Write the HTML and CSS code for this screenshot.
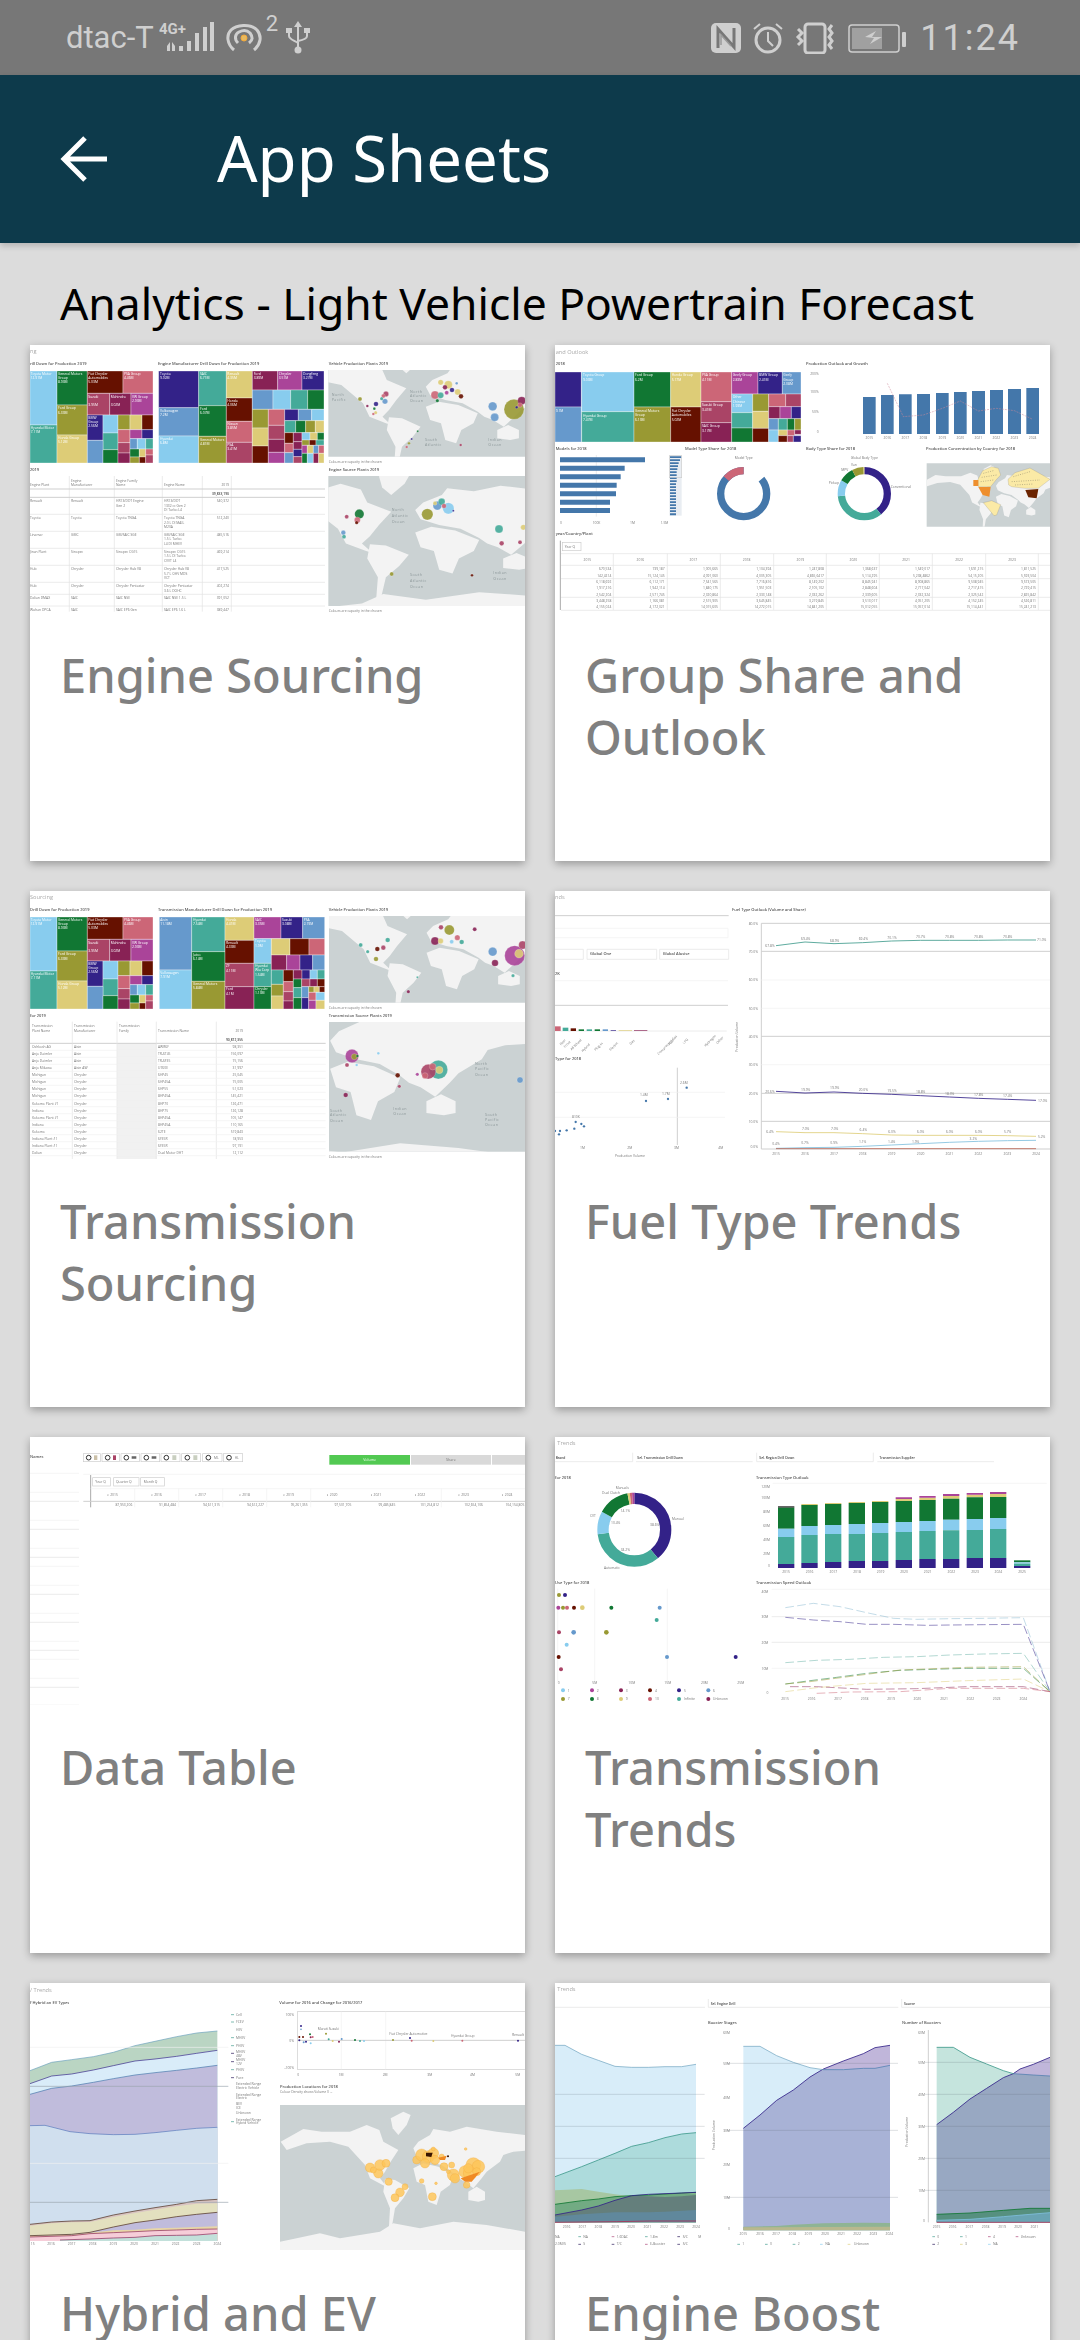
FILE: index.html
```html
<!DOCTYPE html>
<html lang="en">
<head>
<meta charset="utf-8">
<title>App Sheets</title>
<link rel="stylesheet" href="styles.css">
</head>
<body>
<div class="status">
  <div class="status-left">
    <span class="carrier">dtac-T</span>
    <svg class="ic" width="56" height="34" viewBox="0 0 56 34"><text class="net" x="0" y="13">4G+</text><path class="fill" d="M8 30h3v-9l-3 4zM13 21v9h3v-5zM20 25h4v5h-4zM28 20h4v10h-4zM36 12h4v18h-4zM44 6h4v24h-4zM51 1h4v29h-4z"/></svg>
    <svg class="ic hot" width="36" height="30" viewBox="0 0 36 30"><path class="line w3" d="M8 27C1 21 0 12 5 7s19-7 26 0c5 6 4 14-3 20"/><path class="line w3" d="M12 20c-4-4-3-9 1-11s8-2 11 1c3 4 3 7-1 10"/><circle class="fill" cx="18" cy="15" r="3"/></svg>
    <span class="sup">2</span>
    <svg class="ic usb" width="24" height="33" viewBox="0 0 24 33"><path class="line w2" d="M12 4v25M3 11v4c0 3 4 4 9 7M21 11v4c0 3-4 4-9 5"/><path class="fill" d="M12 0l4 6H8zM0 7h6v5H0zM18 7h6v5h-6z"/><circle class="fill" cx="12" cy="29" r="3.5"/></svg>
  </div>
  <div class="status-right">
    <svg class="ic" width="32" height="32" viewBox="0 0 32 32"><rect class="fill" x="1" y="1" width="30" height="30" rx="5"/><path class="cut" d="M8 26V7l16 18V6"/><path class="cut2" d="M11 23V13l10 11"/></svg>
    <svg class="ic" width="32" height="32" viewBox="0 0 32 32"><circle class="line w3" cx="16" cy="18" r="12"/><path class="line w2" d="M16 10v9l5 5M2 7l6-5M30 7l-6-5"/></svg>
    <svg class="ic" width="42" height="32" viewBox="0 0 42 32"><rect class="line w3" x="11" y="2" width="20" height="29" rx="3"/><path class="line w3" d="M4 7l4 4-4 4 4 4-4 4M38 3l-3 4 3 4-3 4 3 4-3 4 3 4"/></svg>
    <svg class="ic batt" width="60" height="30" viewBox="0 0 60 30"><rect class="line w1" x="1" y="2" width="50" height="27" rx="3"/><rect class="bfill" x="4" y="5" width="30" height="21"/><path class="fill" d="M17 14l11-6-4 6h10l-12 7 4-6z"/><rect class="fill" x="54" y="9" width="4" height="15" rx="1"/></svg>
    <span class="time">11:24</span>
  </div>
</div>
<header class="appbar">
  <svg class="back" width="48" height="48" viewBox="0 0 48 48"><path d="M47 24H5M25 3L4 24l21 21"/></svg>
  <h1 class="apptitle">App Sheets</h1>
</header>
<main class="content">
  <h2 class="apptext">Analytics - Light Vehicle Powertrain Forecast</h2>
  <div class="grid">

    <article class="card">
      <svg class="thumb" viewBox="30 15 1485 804">
        <defs>
          <g id="world">
            <rect class="sea" x="600" y="300" width="1200" height="640"/>
            <path class="land" d="M782 500L850 462L905 470L990 470L1040 450L1078 465L1090 500L1135 525L1112 560L1095 590L1080 610L1100 635L1088 630L1050 610L1035 570L985 515L930 500L860 505L800 525Z"/>
            <path class="land" d="M1112 430L1150 410L1172 420L1160 450L1135 480L1118 460Z"/>
            <path class="land" d="M1095 612L1125 615L1168 640L1150 670L1125 700L1115 760L1105 790L1110 700L1090 650Z"/>
            <path class="land" d="M1180 580L1210 565L1255 575L1300 600L1290 630L1262 650L1250 690L1225 680L1215 630L1190 620Z"/>
            <path class="land" d="M1190 545L1180 520L1195 500L1230 480L1240 462L1290 470L1340 455L1430 470L1515 480L1540 490L1540 525L1480 530L1450 540L1440 560L1400 590L1385 610L1360 640L1335 620L1315 610L1300 595L1265 570L1225 560Z"/>
            <path class="land" d="M1345 650L1370 635L1395 650L1395 675L1375 680L1345 675Z"/>
            <path class="land" d="M600 810L780 800L830 790L900 775L960 790L1080 770L1120 745L1200 760L1300 740L1400 750L1515 770L1800 780V940H600Z"/>
          </g>
          <g id="tm1" class="tm">
            <path class="lb" d="M30 93H111V255H30z"/><path class="te" d="M30 255H111V369H30z"/><path class="gr" d="M111 93H202V195H111z"/><path class="ol" d="M111 195H202V285H111z"/><path class="sa" d="M111 285H202V369H111z"/><path class="dr" d="M202 93H309V160H202z"/><path class="ro" d="M309 93H399V160H309z"/><path class="bo" d="M202 160H269V225H202z"/><path class="wi" d="M269 160H333V225H269z"/><path class="ma" d="M333 160H399V225H333z"/><path class="pu" d="M202 225H249V301H202z"/><path class="lb" d="M249 225H294V279H249z"/><path class="te" d="M249 279H294V329H249z"/><path class="bl" d="M202 301H249V369H202z"/><path class="gr" d="M249 329H294V369H249z"/><path class="ol" d="M294 225H330V269H294z"/><path class="sa" d="M330 225H366V269H330z"/><path class="dr" d="M366 225H399V269H366z"/><path class="ro" d="M294 269H330V308H294z"/><path class="bo" d="M294 308H330V339H294z"/><path class="wi" d="M294 339H330V369H294z"/><path class="ma" d="M330 269H366V296H330z"/><path class="pu" d="M366 269H399V296H366z"/><path class="bl" d="M330 296H352V327H330z"/><path class="lb" d="M352 296H377V327H352z"/><path class="te" d="M377 296H399V327H377z"/><path class="gr" d="M330 327H358V351H330z"/><path class="sa" d="M358 327H377V351H358z"/><path class="ro" d="M377 327H399V345H377z"/><path class="ol" d="M330 351H358V369H330z"/><path class="dr" d="M358 351H377V369H358z"/><path class="bo" d="M377 345H399V369H377z"/>
            <text class="tw" x="32" y="104">Toyota Motor</text><text class="tw" x="32" y="116">12.91M</text><text class="tw" x="114" y="104">General Motors</text><text class="tw" x="114" y="116">Group</text><text class="tw" x="114" y="130">8.93M</text><text class="tw" x="205" y="104">Fiat Chrysler</text><text class="tw" x="205" y="116">Automobiles</text><text class="tw" x="205" y="130">5.03M</text><text class="tw" x="312" y="104">PSA Group</text><text class="tw" x="312" y="116">4.46M</text><text class="tw" x="205" y="173">Suzuki</text><text class="tw" x="205" y="198">3.95M</text><text class="tw" x="272" y="173">Mahindra</text><text class="tw" x="272" y="198">3.02M</text><text class="tw" x="336" y="173">VW Group</text><text class="tw" x="336" y="186">2.93M</text><text class="tw" x="114" y="208">Ford Group</text><text class="tw" x="114" y="221">6.33M</text><text class="tw" x="114" y="298">Honda Group</text><text class="tw" x="114" y="310">5.12M</text><text class="tw" x="32" y="266">Hyundai Motor</text><text class="tw" x="32" y="278">7.11M</text><text class="tw" x="205" y="236">BMW</text><text class="tw" x="205" y="248">Group</text><text class="tw" x="205" y="262">2.56M</text>
          </g>
        </defs>
        <text class="tl" x="30" y="39">ng</text>
        <text class="th" x="30" y="74">rill Down for Production 2019</text>
        <text class="th" x="414" y="74">Engine Manufacturer Drill Down for Production 2019</text>
        <text class="th" x="926" y="74">Vehicle Production Plants 2019</text>
        <use href="#tm1"/>
        <g class="tm">
          <path class="pu" d="M416 93H536V203H416z"/><path class="bl" d="M416 203H536V288H416z"/><path class="lb" d="M416 288H536V369H416z"/><path class="te" d="M536 93H619V197H536z"/><path class="gr" d="M536 197H619V289H536z"/><path class="ol" d="M536 289H619V369H536z"/><path class="sa" d="M619 93H697V174H619z"/><path class="dr" d="M619 174H697V244H619z"/><path class="ro" d="M619 244H697V307H619z"/><path class="bo" d="M619 307H697V369H619z"/><path class="wi" d="M697 93H773V150H697z"/><path class="ma" d="M773 93H846V150H773z"/><path class="pu" d="M846 93H912V150H846z"/><path class="bl" d="M697 150H759V208H697z"/><path class="lb" d="M759 150H812V208H759z"/><path class="te" d="M812 150H863V208H812z"/><path class="gr" d="M863 150H912V208H863z"/><path class="ol" d="M697 208H745V264H697z"/><path class="sa" d="M697 264H745V318H697z"/><path class="dr" d="M697 318H745V369H697z"/><path class="ro" d="M745 208H794V256H745z"/><path class="bo" d="M745 256H794V298H745z"/><path class="wi" d="M745 298H794V337H745z"/><path class="ma" d="M745 337H794V369H745z"/><path class="pu" d="M794 208H835V242H794z"/><path class="bl" d="M835 208H875V242H835z"/><path class="lb" d="M875 208H912V242H875z"/><path class="te" d="M794 242H827V278H794z"/><path class="gr" d="M827 242H857V278H827z"/><path class="ol" d="M857 242H886V278H857z"/><path class="sa" d="M886 242H912V278H886z"/><path class="dr" d="M794 278H820V310H794z"/><path class="wi" d="M820 278H846V305H820z"/><path class="lb" d="M846 278H870V300H846z"/><path class="sa" d="M870 278H892V300H870z"/><path class="gr" d="M892 278H912V300H892z"/><path class="ro" d="M794 310H820V338H794z"/><path class="wi" d="M820 305H846V328H820z"/><path class="bl" d="M794 338H820V369H794z"/><path class="pu" d="M820 328H846V350H820z"/><path class="bo" d="M820 350H846V369H820z"/><path class="ol" d="M846 300H868V316H846z"/><path class="dr" d="M868 300H888V316H868z"/><path class="te" d="M888 300H912V316H888z"/><path class="ma" d="M846 316H862V340H846z"/><path class="sa" d="M862 316H880V340H862z"/><path class="bl" d="M880 316H896V340H880z"/><path class="ro" d="M896 316H912V340H896z"/><path class="gr" d="M846 340H862V369H846z"/><path class="lb" d="M862 340H880V369H862z"/><path class="wi" d="M880 340H896V369H880z"/><path class="sa" d="M896 340H912V369H896z"/>
          <text class="tw" x="420" y="104">Toyota</text><text class="tw" x="420" y="116">9.92M</text><text class="tw" x="540" y="104">SAIC</text><text class="tw" x="540" y="116">6.71M</text><text class="tw" x="622" y="104">Renault</text><text class="tw" x="622" y="116">4.35M</text><text class="tw" x="701" y="104">Ford</text><text class="tw" x="701" y="116">3.89M</text><text class="tw" x="776" y="104">Chrysler</text><text class="tw" x="776" y="116">3.51M</text><text class="tw" x="849" y="104">Dongfeng</text><text class="tw" x="849" y="116">3.27M</text><text class="tw" x="420" y="216">Volkswagen</text><text class="tw" x="420" y="228">7.2M</text><text class="tw" x="540" y="209">Ford</text><text class="tw" x="540" y="221">6.07M</text><text class="tw" x="622" y="186">Honda</text><text class="tw" x="622" y="198">4.06M</text><text class="tw" x="622" y="256">Nissan</text><text class="tw" x="622" y="268">3.85M</text><text class="tw" x="420" y="300">Hyundai</text><text class="tw" x="420" y="312">6.8M</text><text class="tw" x="540" y="302">General Motors</text><text class="tw" x="540" y="314">4.81M</text><text class="tw" x="622" y="318">PSA</text><text class="tw" x="622" y="330">3.41M</text>
        </g>
        <svg x="925" y="90" width="590" height="260" viewBox="955 470 454 260" preserveAspectRatio="none"><use href="#world"/></svg>
        <g class="bub">
          <circle class="ro" cx="1245" cy="165" r="12"/><circle class="sa" cx="1262" cy="127" r="8"/><circle class="te" cx="1262" cy="166" r="9"/><circle class="sa" cx="1285" cy="134" r="12"/><circle class="wi" cx="1275" cy="142" r="7"/><circle class="pu" cx="1296" cy="150" r="7"/><circle class="ma" cx="1280" cy="158" r="6"/><circle class="sa" cx="1313" cy="156" r="9"/><circle class="dr" cx="1323" cy="169" r="7"/><circle class="gr" cx="1252" cy="182" r="5"/><circle class="bl" cx="1310" cy="130" r="4"/>
          <circle class="bo" cx="1098" cy="162" r="8"/><circle class="ro" cx="1090" cy="168" r="6"/><circle class="bl" cx="1095" cy="184" r="8"/><circle class="pu" cx="1068" cy="192" r="7"/><circle class="gr" cx="1063" cy="206" r="4"/><circle class="ol" cx="1020" cy="177" r="6"/><circle class="wi" cx="1042" cy="198" r="4"/><circle class="te" cx="1085" cy="176" r="5"/><circle class="sa" cx="1067" cy="218" r="5"/><circle class="ro" cx="1060" cy="222" r="4"/>
          <circle class="gr" cx="1193" cy="274" r="3"/><circle class="pu" cx="1175" cy="297" r="3"/><circle class="ol" cx="1167" cy="310" r="4"/><circle class="ro" cx="1160" cy="321" r="4"/>
          <circle class="bl" cx="1418" cy="199" r="13"/><circle class="bl" cx="1424" cy="232" r="12"/><circle class="ol" cx="1482" cy="208" r="30"/><circle class="wi" cx="1505" cy="182" r="12"/><circle class="ro" cx="1500" cy="195" r="7"/><circle class="pu" cx="1490" cy="202" r="4"/><circle class="bo" cx="1322" cy="315" r="4"/>
        </g>
        <text class="ts" x="935" y="168">North</text><text class="ts" x="935" y="182">Pacific</text><text class="ts" x="1170" y="158">North</text><text class="ts" x="1170" y="172">Atlantic</text><text class="ts" x="1170" y="187">Ocean</text><text class="ts" x="1215" y="304">South</text><text class="ts" x="1215" y="318">Atlantic</text><text class="ts" x="1405" y="302">Indian</text><text class="ts" x="1405" y="318">Ocean</text>
        <text class="tx" x="926" y="368">Colours are capacity in the chosen</text>
        <text class="th" x="926" y="393">Engine Source Plants 2019</text>
        <text class="th" x="30" y="393">2019</text>
        <svg x="925" y="408" width="590" height="390" viewBox="1017 429 369 348" preserveAspectRatio="none"><use href="#world"/></svg>
        <g class="bub">
          <circle class="gr" cx="1018" cy="522" r="14"/><circle class="ro" cx="1012" cy="540" r="9"/><circle class="dr" cx="1010" cy="548" r="5"/><circle class="bo" cx="980" cy="530" r="6"/><circle class="bl" cx="970" cy="578" r="7"/><circle class="te" cx="972" cy="590" r="6"/><circle class="ol" cx="1222" cy="523" r="17"/><circle class="lb" cx="1285" cy="505" r="17"/><circle class="bl" cx="1252" cy="497" r="13"/><circle class="te" cx="1265" cy="485" r="10"/><circle class="ro" cx="1272" cy="498" r="7"/><circle class="sa" cx="1245" cy="490" r="6"/><circle class="pu" cx="1300" cy="512" r="3"/><circle class="te" cx="1437" cy="567" r="12"/><circle class="bo" cx="1445" cy="610" r="7"/><circle class="ol" cx="1115" cy="702" r="6"/><circle class="dr" cx="1356" cy="706" r="4"/><circle class="sa" cx="1510" cy="562" r="8"/><circle class="bo" cx="1500" cy="607" r="6"/>
        </g>
        <text class="ts" x="1115" y="512">North</text><text class="ts" x="1115" y="530">Atlantic</text><text class="ts" x="1115" y="550">Ocean</text><text class="ts" x="1170" y="708">South</text><text class="ts" x="1170" y="727">Atlantic</text><text class="ts" x="1170" y="745">Ocean</text><text class="ts" x="1420" y="702">Indian</text><text class="ts" x="1420" y="720">Ocean</text>
        <text class="tx" x="926" y="815">Colours are capacity in the chosen</text>
        <path class="gl" d="M148 408V815M283 408V815M427 408V815M547 408V815M634 408V815"/>
        <path class="gd" d="M30 447H915M30 472H915"/>
        <path class="gl" d="M30 523H915M30 574H915M30 625H915M30 676H915M30 727H915M30 763H915M30 798H915"/>
        <g class="tt"><text x="30" y="439">Engine Plant</text><text x="153" y="425">Engine</text><text x="153" y="439">Manufacturer</text><text x="288" y="425">Engine Family</text><text x="288" y="439">Name</text><text x="432" y="439">Engine Name</text><text class="r" x="627" y="439">2019</text><text class="r b" x="627" y="464">39,833,190</text>
        <text x="30" y="486">Renault</text><text x="153" y="486">Renault</text><text x="288" y="486">HR13/DDT Engine</text><text x="288" y="500">Gen 2</text><text x="432" y="486">HR13/DDT</text><text x="432" y="500">1332 cc Gen 2</text><text x="432" y="514">DI Turbo L4</text><text class="r" x="627" y="486">540,372</text>
        <text x="30" y="537">Toyota</text><text x="153" y="537">Toyota</text><text x="288" y="537">Toyota TNGA</text><text x="432" y="537">Toyota TNGA</text><text x="432" y="551">2.0 L DI MAIL</text><text x="432" y="565">M20A</text><text class="r" x="627" y="537">512,240</text>
        <text x="30" y="587">Linamar</text><text x="153" y="587">GMC</text><text x="288" y="587">GM/SAIC SGE</text><text x="432" y="587">GM/SAIC SGE</text><text x="432" y="601">1.5 L Turbo</text><text x="432" y="615">L4 DI MHEV</text><text class="r" x="627" y="587">485,516</text>
        <text x="30" y="638">Jinan Plant</text><text x="153" y="638">Sinopec</text><text x="288" y="638">Sinopec CG15</text><text x="432" y="638">Sinopec CG15</text><text x="432" y="652">1.5 L DI Turbo</text><text x="432" y="666">CVVT L4</text><text class="r" x="627" y="638">469,214</text>
        <text x="30" y="690">Hub</text><text x="153" y="690">Chrysler</text><text x="288" y="690">Chrysler Hub V8</text><text x="432" y="690">Chrysler Hub V8</text><text x="432" y="704">5.7 L OHV MDS</text><text x="432" y="718">VCT</text><text class="r" x="627" y="690">417,525</text>
        <text x="30" y="741">Hub</text><text x="153" y="741">Chrysler</text><text x="288" y="741">Chrysler Pentastar</text><text x="432" y="741">Chrysler Pentastar</text><text x="432" y="755">3.6 L DOHC</text><text class="r" x="627" y="741">402,274</text>
        <text x="30" y="776">Dalian DMAX</text><text x="153" y="776">SAIC</text><text x="288" y="776">SAIC NSE</text><text x="432" y="776">SAIC NSE 1.5 L</text><text class="r" x="627" y="776">391,052</text>
        <text x="30" y="812">Wuhan DPCA</text><text x="153" y="812">SAIC</text><text x="288" y="812">SAIC EP6 Gen</text><text x="432" y="812">SAIC EP6 1.6 L</text><text class="r" x="627" y="812">389,447</text></g>
      </svg>
      <p class="cap">Engine Sourcing</p>
    </article>

    <article class="card">
      <svg class="thumb" viewBox="15 15 1485 804">
        <text class="tl" x="17" y="41">and Outlook</text>
        <text class="th" x="17" y="76">2018</text><text class="th" x="768" y="76">Production Outlook and Growth</text>
        <g class="tm">
          <path class="pu" d="M15 96H94V201H15z"/><path class="bl" d="M15 201H94V306H15z"/><path class="lb" d="M95 96H252V215H95z"/><path class="te" d="M95 215H252V306H95z"/><path class="gr" d="M252 96H362V201H252z"/><path class="ol" d="M252 201H362V306H252z"/><path class="sa" d="M362 96H453V201H362z"/><path class="dr" d="M362 201H453V306H362z"/><path class="ro" d="M453 96H545V185H453z"/><path class="bo" d="M453 185H545V248H453z"/><path class="wi" d="M453 248H545V306H453z"/><path class="ma" d="M545 96H624V162H545z"/><path class="pu" d="M624 96H697V162H624z"/><path class="bl" d="M697 96H753V162H697z"/><path class="lb" d="M545 162H608V218H545z"/><path class="te" d="M545 218H608V264H545z"/><path class="gr" d="M545 264H608V306H545z"/><path class="ol" d="M608 162H656V214H608z"/><path class="sa" d="M608 214H656V265H608z"/><path class="dr" d="M608 265H656V306H608z"/><path class="ro" d="M656 162H707V200H656z"/><path class="bo" d="M707 162H753V200H707z"/><path class="wi" d="M656 200H690V236H656z"/><path class="ma" d="M690 200H724V236H690z"/><path class="pu" d="M724 200H753V236H724z"/><path class="bl" d="M656 236H685V270H656z"/><path class="te" d="M685 236H712V270H685z"/><path class="gr" d="M712 236H734V270H712z"/><path class="ol" d="M734 236H753V270H734z"/><path class="lb" d="M656 270H685V306H656z"/><path class="sa" d="M685 270H712V287H685z"/><path class="ro" d="M712 270H734V287H712z"/><path class="wi" d="M734 270H753V283H734z"/><path class="dr" d="M685 287H712V306H685z"/><path class="bo" d="M712 287H730V306H712z"/><path class="pu" d="M730 287H753V306H730z"/>
          <text class="tw" x="17" y="216">9.1M</text><text class="tw" x="99" y="109">Toyota Group</text><text class="tw" x="99" y="122">9.03M</text><text class="tw" x="99" y="231">Hyundai Group</text><text class="tw" x="99" y="243">7.47M</text><text class="tw" x="255" y="109">Ford Group</text><text class="tw" x="255" y="122">6.2M</text><text class="tw" x="255" y="215">General Motors</text><text class="tw" x="255" y="228">Group</text><text class="tw" x="255" y="242">6.13M</text><text class="tw" x="365" y="109">Honda Group</text><text class="tw" x="365" y="122">5.17M</text><text class="tw" x="365" y="215">Fiat Chrysler</text><text class="tw" x="365" y="228">Automobiles</text><text class="tw" x="365" y="242">5.02M</text><text class="tw" x="456" y="109">PSA Group</text><text class="tw" x="456" y="122">4.11M</text><text class="tw" x="456" y="197">Suzuki Group</text><text class="tw" x="456" y="212">3.41M</text><text class="tw" x="456" y="261">SAIC Group</text><text class="tw" x="456" y="275">3.17M</text><text class="tw" x="548" y="109">Geely Group</text><text class="tw" x="548" y="122">2.83M</text><text class="tw" x="627" y="109">BMW Group</text><text class="tw" x="627" y="122">2.41M</text><text class="tw" x="700" y="109">Geely</text><text class="tw" x="700" y="122">Group</text><text class="tw" x="700" y="136">2.08M</text><text class="tw" x="548" y="175">Other</text><text class="tw" x="548" y="189">Chinese</text><text class="tw" x="548" y="202">1.93M</text>
        </g>
        <g class="tt"><text class="r" x="806" y="104">200%</text><text class="r" x="806" y="160">100%</text><text class="r" x="806" y="220">50%</text><text class="r" x="806" y="278">0</text></g>
        <path class="barb" d="M939 171h38v111h-38zM993 165h38v117h-38zM1047 163h38v119h-38zM1101 162h39v120h-39zM1158 159h38v123h-38zM1212 156h38v126h-38zM1266 153h39v129h-39zM1320 150h39v132h-39zM1374 147h39v135h-39zM1429 144h38v138h-38z"/>
        <path class="dash" d="M1012 130L1060 230L1120 225L1177 205L1231 183L1285 213L1339 205L1393 212L1448 238"/>
        <g class="tt mid"><text x="958" y="296">2015</text><text x="1012" y="296">2016</text><text x="1066" y="296">2017</text><text x="1120" y="296">2018</text><text x="1177" y="296">2019</text><text x="1231" y="296">2020</text><text x="1285" y="296">2021</text><text x="1339" y="296">2022</text><text x="1393" y="296">2023</text><text x="1448" y="296">2024</text></g>
        <text class="th" x="17" y="329">Models for 2018</text><text class="th" x="405" y="329">Model Type Share for 2018</text><text class="th" x="768" y="329">Body Type Share for 2018</text><text class="th" x="1128" y="329">Production Concentration by Country for 2018</text>
        <path class="gl" d="M139 345V530"/>
        <path class="barb" d="M30 352h255v15H30zM30 377h194v15H30zM30 403h182v15H30zM30 428h170v15H30zM30 454h168v15H30zM30 479h150v15H30zM30 504h150v15H30z"/>
        <rect class="scrollb" x="358" y="347" width="37" height="180"/>
        <path class="barb" d="M360 349h34v5h-34zM360 358h30v5h-30zM360 367h26v5h-26zM360 376h24v5h-24zM360 385h22v5h-22zM360 394h20v5h-20zM360 403h20v5h-20zM360 412h20v5h-20zM360 421h20v5h-20zM360 430h18v5h-18zM360 439h18v5h-18zM360 448h18v5h-18zM360 457h18v5h-18zM360 466h18v5h-18zM360 475h18v5h-18zM360 484h18v5h-18zM360 493h18v5h-18zM360 502h18v5h-18zM360 511h18v5h-18zM360 520h18v6h-18z"/>
        <rect class="outline" x="358" y="347" width="37" height="66"/>
        <g class="tt"><text x="30" y="551">0</text><text x="128" y="551">100K</text><text x="240" y="551">1M</text><text x="332" y="551">1.5M</text><text class="mid" x="581" y="358">Model Type</text><text class="mid" x="943" y="358">Global Body Type</text><text x="1022" y="443">Conventional</text><text x="836" y="431">Pickup</text><text x="874" y="392">MPV</text><text x="903" y="379">Van</text></g>
        <circle class="don dbl" cx="581" cy="461" r="69" pathLength="100" stroke-dasharray="86 14" stroke-dashoffset="-14" transform="rotate(-90 581 461)"/>
        <circle class="don dro" cx="581" cy="461" r="69" pathLength="100" stroke-dasharray="14 86" stroke-dashoffset="14" transform="rotate(-90 581 461)"/>
        <g transform="rotate(-90 943 461)">
          <circle class="don dpu" cx="943" cy="461" r="69" pathLength="100" stroke-dasharray="39 61"/>
          <circle class="don dte" cx="943" cy="461" r="69" pathLength="100" stroke-dasharray="34 66" stroke-dashoffset="-39"/>
          <circle class="don dlb" cx="943" cy="461" r="69" pathLength="100" stroke-dasharray="10 90" stroke-dashoffset="-73"/>
          <circle class="don dgr" cx="943" cy="461" r="69" pathLength="100" stroke-dasharray="9 91" stroke-dashoffset="-83"/>
          <circle class="don dol" cx="943" cy="461" r="69" pathLength="100" stroke-dasharray="7 93" stroke-dashoffset="-92"/>
          <circle class="don dsa" cx="943" cy="461" r="69" pathLength="100" stroke-dasharray="1 99" stroke-dashoffset="-99"/>
        </g>
        <svg x="1130" y="370" width="370" height="190" viewBox="802 400 673 340" preserveAspectRatio="none"><use href="#world"/></svg>
        <path class="chy" d="M1284 418L1298 392L1325 380L1345 385L1352 405L1338 420L1322 440L1285 440ZM1300 488L1325 482L1352 494L1340 525L1332 527ZM1374 418L1395 398L1440 384L1500 418L1465 445L1425 445L1385 440L1376 435Z"/>
        <path class="chl" d="M1300 400L1330 392M1295 412L1340 405M1292 425L1330 420M1390 410L1440 395M1385 425L1470 420M1395 435L1450 432"/>
        <path class="cho" d="M1270 420H1285V438H1270zM1285 441L1322 441L1318 470L1298 465Z"/>
        <path class="chd" d="M1426 450L1465 447L1460 475L1435 472Z"/>
        <text class="th" x="17" y="585">year/Country/Plant</text>
        <path class="gd2" d="M31 602V810"/>
        <rect class="outline" x="37" y="607" width="56" height="25"/>
        <text class="tt" x="44" y="624">Year Q</text>
        <path class="gl" d="M33 641H1500M33 676H1500M33 716H1500M33 772H1500M33 811H1500M190 641V810M352 641V810M511 641V810M671 641V810M829 641V810M988 641V810M1147 641V810M1307 641V810M1465 641V810"/>
        <g class="tt mid"><text x="112" y="662">2015</text><text x="271" y="662">2016</text><text x="430" y="662">2017</text><text x="590" y="662">2018</text><text x="751" y="662">2019</text><text x="910" y="662">2020</text><text x="1068" y="662">2021</text><text x="1227" y="662">2022</text><text x="1386" y="662">2023</text></g>
        <g class="tt"><text class="r" x="184" y="690">670,534</text><text class="r" x="344" y="690">739,187</text><text class="r" x="504" y="690">1,005,665</text><text class="r" x="664" y="690">1,104,394</text><text class="r" x="822" y="690">1,247,808</text><text class="r" x="982" y="690">1,368,637</text><text class="r" x="1140" y="690">1,549,017</text><text class="r" x="1300" y="690">1,691,215</text><text class="r" x="1458" y="690">1,811,525</text>
        <text class="r" x="184" y="710">142,4214</text><text class="r" x="344" y="710">15,124,145</text><text class="r" x="504" y="710">4,091,060</text><text class="r" x="664" y="710">4,005,305</text><text class="r" x="822" y="710">4,865,6417</text><text class="r" x="982" y="710">5,114,295</text><text class="r" x="1140" y="710">5,238,4862</text><text class="r" x="1300" y="710">54,15,205</text><text class="r" x="1458" y="710">5,593,504</text>
        <text class="r" x="184" y="729">6,118,692</text><text class="r" x="344" y="729">6,112,171</text><text class="r" x="504" y="729">7,541,565</text><text class="r" x="664" y="729">7,716,816</text><text class="r" x="822" y="729">8,149,202</text><text class="r" x="982" y="729">8,845,941</text><text class="r" x="1140" y="729">8,908,865</text><text class="r" x="1300" y="729">9,508,945</text><text class="r" x="1458" y="729">9,573,505</text>
        <text class="r" x="184" y="748">1,917,216</text><text class="r" x="344" y="748">1,942,114</text><text class="r" x="504" y="748">1,840,175</text><text class="r" x="664" y="748">1,951,503</text><text class="r" x="822" y="748">2,105,102</text><text class="r" x="982" y="748">2,848,604</text><text class="r" x="1140" y="748">2,717,042</text><text class="r" x="1300" y="748">2,717,415</text><text class="r" x="1458" y="748">2,729,415</text>
        <text class="r" x="184" y="767">2,542,204</text><text class="r" x="344" y="767">2,571,745</text><text class="r" x="504" y="767">2,320,864</text><text class="r" x="664" y="767">2,333,148</text><text class="r" x="822" y="767">2,332,262</text><text class="r" x="982" y="767">2,339,605</text><text class="r" x="1140" y="767">2,332,324</text><text class="r" x="1300" y="767">2,325,542</text><text class="r" x="1458" y="767">2,825,842</text>
        <text class="r" x="184" y="786">3,448,258</text><text class="r" x="344" y="786">1,166,081</text><text class="r" x="504" y="786">2,515,905</text><text class="r" x="664" y="786">3,645,845</text><text class="r" x="822" y="786">3,219,845</text><text class="r" x="982" y="786">3,513,017</text><text class="r" x="1140" y="786">4,051,205</text><text class="r" x="1300" y="786">4,152,245</text><text class="r" x="1458" y="786">4,526,811</text>
        <text class="r" x="184" y="805">4,155,024</text><text class="r" x="344" y="805">4,172,021</text><text class="r" x="504" y="805">14,015,605</text><text class="r" x="664" y="805">14,272,015</text><text class="r" x="822" y="805">14,841,205</text><text class="r" x="982" y="805">15,012,055</text><text class="r" x="1140" y="805">15,057,014</text><text class="r" x="1300" y="805">15,114,441</text><text class="r" x="1458" y="805">15,241,213</text></g>
      </svg>
      <p class="cap">Group Share and Outlook</p>
    </article>

    <article class="card">
      <svg class="thumb" viewBox="30 18 1485 804">
        <text class="tl" x="30" y="41">Sourcing</text>
        <text class="th" x="30" y="77">Drill Down for Production 2019</text><text class="th" x="414" y="77">Transmission Manufacturer Drill Down for Production 2019</text><text class="th" x="926" y="77">Vehicle Production Plants 2019</text>
        <use href="#tm1" y="3"/>
        <g class="tm">
          <path class="bl" d="M418 96H515V255H418z"/><path class="lb" d="M418 255H515V372H418z"/><path class="te" d="M515 96H615V200H515z"/><path class="gr" d="M515 200H615V289H515z"/><path class="ol" d="M515 289H615V372H515z"/><path class="sa" d="M615 96H702V166H615z"/><path class="dr" d="M615 166H702V235H615z"/><path class="bo" d="M615 235H702V305H615z"/><path class="wi" d="M615 305H702V372H615z"/><path class="ma" d="M702 96H783V161H702z"/><path class="pu" d="M783 96H848V161H783z"/><path class="bl" d="M848 96H914V161H848z"/><path class="lb" d="M702 161H754V235H702z"/><path class="sa" d="M754 161H810V210H754z"/><path class="dr" d="M810 161H867V210H810z"/><path class="ro" d="M867 161H914V210H867z"/><path class="te" d="M702 235H754V305H702z"/><path class="gr" d="M702 305H754V372H702z"/><path class="wi" d="M754 210H800V255H754z"/><path class="ma" d="M800 210H840V255H800z"/><path class="pu" d="M840 210H878V255H840z"/><path class="bl" d="M878 210H914V255H878z"/><path class="te" d="M754 255H790V298H754z"/><path class="dr" d="M790 255H820V290H790z"/><path class="wi" d="M820 255H846V282H820z"/><path class="pu" d="M846 255H870V282H846z"/><path class="lb" d="M870 255H892V282H870z"/><path class="te" d="M892 255H914V282H892z"/><path class="ol" d="M754 298H790V333H754z"/><path class="sa" d="M754 333H790V372H754z"/><path class="ro" d="M790 290H820V320H790z"/><path class="gr" d="M820 282H845V308H820z"/><path class="bo" d="M845 282H870V305H845z"/><path class="wi" d="M870 282H892V305H870z"/><path class="dr" d="M892 282H914V305H892z"/><path class="bo" d="M790 320H820V348H790z"/><path class="wi" d="M790 348H820V372H790z"/><path class="te" d="M820 308H845V338H820z"/><path class="bl" d="M845 305H866V338H845z"/><path class="ol" d="M866 305H882V322H866z"/><path class="sa" d="M882 305H898V322H882z"/><path class="dr" d="M898 305H914V322H898z"/><path class="gr" d="M820 338H845V372H820z"/><path class="pu" d="M845 338H866V372H845z"/><path class="ro" d="M866 322H888V346H866z"/><path class="lb" d="M888 322H914V346H888z"/><path class="ma" d="M866 346H888V372H866z"/><path class="sa" d="M888 346H914V372H888z"/>
          <text class="tw" x="421" y="107">Aisin</text><text class="tw" x="421" y="119">11.18M</text><text class="tw" x="421" y="267">Volkswagen</text><text class="tw" x="421" y="280">7.91M</text><text class="tw" x="519" y="107">Hyundai</text><text class="tw" x="519" y="119">7.54M</text><text class="tw" x="519" y="212">Jatco</text><text class="tw" x="519" y="224">6.14M</text><text class="tw" x="519" y="300">General Motors</text><text class="tw" x="519" y="313">5.84M</text><text class="tw" x="618" y="107">Honda</text><text class="tw" x="618" y="119">4.41M</text><text class="tw" x="618" y="177">Renault</text><text class="tw" x="618" y="190">4.33M</text><text class="tw" x="618" y="246">ZF</text><text class="tw" x="618" y="260">4.11M</text><text class="tw" x="618" y="315">Ford</text><text class="tw" x="618" y="329">4.1M</text><text class="tw" x="705" y="107">SAIC</text><text class="tw" x="705" y="119">3.35M</text><text class="tw" x="786" y="107">Suzuki</text><text class="tw" x="786" y="119">3.08M</text><text class="tw" x="851" y="107">PSA</text><text class="tw" x="851" y="119">2.19M</text><text class="tw" x="705" y="172">Toyota</text><text class="tw" x="705" y="185">1.9M</text><text class="tw" x="705" y="246">Hyundai</text><text class="tw" x="705" y="258">Wia Corp</text><text class="tw" x="705" y="274">1.54M</text><text class="tw" x="705" y="315">Chrysler</text><text class="tw" x="705" y="328">1.13M</text>
        </g>
        <svg x="927" y="93" width="588" height="260" viewBox="955 470 452 260" preserveAspectRatio="none"><use href="#world"/></svg>
        <g class="bub">
          <circle class="wi" cx="1245" cy="168" r="12"/><circle class="ol" cx="1288" cy="135" r="15"/><circle class="bo" cx="1263" cy="127" r="7"/><circle class="ro" cx="1312" cy="158" r="8"/><circle class="lb" cx="1295" cy="170" r="6"/><circle class="te" cx="1325" cy="171" r="7"/><circle class="wi" cx="1364" cy="133" r="6"/><circle class="sa" cx="1262" cy="168" r="8"/><circle class="te" cx="1103" cy="165" r="7"/><circle class="dr" cx="1072" cy="192" r="7"/><circle class="bo" cx="1090" cy="188" r="7"/><circle class="te" cx="1022" cy="180" r="6"/><circle class="ol" cx="1068" cy="222" r="7"/><circle class="te" cx="1043" cy="200" r="5"/><circle class="wi" cx="1165" cy="320" r="5"/><circle class="te" cx="1192" cy="277" r="3"/><circle class="bl" cx="1418" cy="200" r="13"/><circle class="wi" cx="1425" cy="234" r="10"/><circle class="ma" cx="1484" cy="212" r="30"/><circle class="sa" cx="1497" cy="206" r="13"/><circle class="bo" cx="1508" cy="180" r="12"/><circle class="te" cx="1479" cy="272" r="5"/>
        </g>
        <text class="tx" x="926" y="372">Colours are capacity in the chosen</text><text class="th" x="926" y="396">Transmission Source Plants 2019</text><text class="th" x="30" y="396">for 2019</text>
        <svg x="927" y="411" width="588" height="389" viewBox="1178 480 336 278" preserveAspectRatio="none"><use href="#world"/></svg>
        <g class="bub">
          <circle class="ma" cx="996" cy="513" r="20"/><circle class="ol" cx="1003" cy="515" r="9"/><circle class="gr" cx="1012" cy="513" r="4"/><circle class="bo" cx="981" cy="540" r="6"/><circle class="lb" cx="1010" cy="540" r="4"/><circle class="lb" cx="1075" cy="505" r="4"/><circle class="te" cx="1255" cy="554" r="28"/><circle class="sa" cx="1258" cy="555" r="11"/><circle class="bo" cx="1225" cy="560" r="22"/><circle class="ro" cx="1238" cy="545" r="10"/><circle class="ro" cx="1215" cy="572" r="9"/><circle class="dr" cx="1133" cy="571" r="7"/><circle class="bo" cx="1138" cy="604" r="5"/><circle class="wi" cx="977" cy="630" r="7"/><circle class="bl" cx="1500" cy="585" r="9"/><circle class="ma" cx="1192" cy="568" r="5"/>
        </g>
        <text class="ts" x="1365" y="540">North</text><text class="ts" x="1365" y="556">Pacific</text><text class="ts" x="1365" y="572">Ocean</text><text class="ts" x="930" y="680">South</text><text class="ts" x="930" y="694">Atlantic</text><text class="ts" x="930" y="710">Ocean</text><text class="ts" x="1395" y="692">South</text><text class="ts" x="1395" y="707">Pacific</text><text class="ts" x="1395" y="722">Ocean</text><text class="ts" x="1120" y="676">Indian</text><text class="ts" x="1120" y="690">Ocean</text>
        <text class="tx" x="926" y="819">Colours are capacity in the chosen</text>
        <rect class="shade" x="292" y="476" width="117" height="346"/>
        <path class="gd" d="M30 475H917"/>
        <path class="gl" d="M157 410V822M291 410V822M409 410V822M589 410V822"/>
        <path class="gf" d="M30 496H917M30 517H917M30 538H917M30 559H917M30 580H917M30 601H917M30 622H917M30 644H917M30 665H917M30 686H917M30 707H917M30 728H917M30 749H917M30 770H917M30 791H917M30 812H917"/>
        <g class="tt"><text x="36" y="426">Transmission</text><text x="36" y="440">Plant Name</text><text x="162" y="426">Transmission</text><text x="162" y="440">Manufacturer</text><text x="297" y="426">Transmission</text><text x="297" y="440">Family</text><text x="414" y="440">Transmission Name</text><text class="r" x="669" y="440">2019</text><text class="r b" x="669" y="467">90,812,355</text>
        <text x="36" y="489">Oshkosh AG</text><text x="162" y="489">Aisin</text><text x="414" y="489">AWR6F</text><text class="r" x="669" y="489">98,351</text>
        <text x="36" y="510">Anjo Daimler</text><text x="162" y="510">Aisin</text><text x="414" y="510">TR-6T45</text><text class="r" x="669" y="510">156,097</text>
        <text x="36" y="531">Anjo Daimler</text><text x="162" y="531">Aisin</text><text x="414" y="531">TR-6F35</text><text class="r" x="669" y="531">75,156</text>
        <text x="36" y="552">Anjo Mikawa</text><text x="162" y="552">Aisin AW</text><text x="414" y="552">U760E</text><text class="r" x="669" y="552">31,997</text>
        <text x="36" y="574">Michigan</text><text x="162" y="574">Chrysler</text><text x="414" y="574">6HP45</text><text class="r" x="669" y="574">25,045</text>
        <text x="36" y="595">Michigan</text><text x="162" y="595">Chrysler</text><text x="414" y="595">6HP45A</text><text class="r" x="669" y="595">75,005</text>
        <text x="36" y="616">Michigan</text><text x="162" y="616">Chrysler</text><text x="414" y="616">6HP55</text><text class="r" x="669" y="616">51,023</text>
        <text x="36" y="637">Michigan</text><text x="162" y="637">Chrysler</text><text x="414" y="637">8HP45A</text><text class="r" x="669" y="637">145,421</text>
        <text x="36" y="659">Kokomo Plant #1</text><text x="162" y="659">Chrysler</text><text x="414" y="659">8HP70</text><text class="r" x="669" y="659">126,471</text>
        <text x="36" y="680">Indiana</text><text x="162" y="680">Chrysler</text><text x="414" y="680">8HP75</text><text class="r" x="669" y="680">126,128</text>
        <text x="36" y="701">Kokomo Plant #1</text><text x="162" y="701">Chrysler</text><text x="414" y="701">8HP45A</text><text class="r" x="669" y="701">105,147</text>
        <text x="36" y="722">Indiana</text><text x="162" y="722">Chrysler</text><text x="414" y="722">8HP45A</text><text class="r" x="669" y="722">110,165</text>
        <text x="36" y="743">Kokomo</text><text x="162" y="743">Chrysler</text><text x="414" y="743">62TE</text><text class="r" x="669" y="743">519,843</text>
        <text x="36" y="764">Indiana Plant #1</text><text x="162" y="764">Chrysler</text><text x="414" y="764">6F35R</text><text class="r" x="669" y="764">18,953</text>
        <text x="36" y="785">Indiana Plant #1</text><text x="162" y="785">Chrysler</text><text x="414" y="785">6F35R</text><text class="r" x="669" y="785">97,191</text>
        <text x="36" y="806">Dalian</text><text x="162" y="806">Chrysler</text><text x="414" y="806">Dual Motor DHT</text><text class="r" x="669" y="806">12,112</text></g>
      </svg>
      <p class="cap">Transmission Sourcing</p>
    </article>

    <article class="card">
      <svg class="thumb" viewBox="15 18 1485 804">
        <text class="tl" x="15" y="43">nds</text>
        <text class="th" x="546" y="77">Fuel Type Outlook (Volume and Share)</text>
        <path class="gd" d="M15 92H536M15 361H534"/>
        <path class="gf" d="M15 130H534M15 158H534M534 130V158M15 287H534"/>
        <path class="gl" d="M15 223H100V193H15M111 193H320V223H111zM329 193H536V223H329zM15 438H530"/>
        <text class="th" x="120" y="209">Global One</text><text class="th" x="338" y="209">Global Alasise</text><text class="th" x="15" y="269">2K</text><text class="th" x="15" y="524">Type for 2018</text>
        <path class="ro" d="M15 424H32V438H15z"/><path class="te" d="M38 428H55V438H38z"/><path class="dr" d="M62 430H78V438H62z"/><path class="gr" d="M86 433H102V438H86z"/><path class="te" d="M110 433H126V438H110z"/><path class="gr" d="M134 433H150V438H134z"/><path class="bl" d="M158 433H174V438H158z"/><path class="pu" d="M182 436H198V438H182z"/><path class="sa" d="M206 436H246V438H206z"/><path class="wi" d="M252 436H292V438H252z"/>
        <g class="tt rot"><text transform="rotate(-45 40 460)" x="20" y="470">Rear</text><text transform="rotate(-45 65 465)" x="34" y="468">Front</text><text transform="rotate(-45 90 472)" x="55" y="472">All Wheel</text><text transform="rotate(-45 130 470)" x="85" y="470">Hybrid</text><text transform="rotate(-45 165 470)" x="125" y="470">Plug-in</text><text transform="rotate(-45 210 470)" x="170" y="470">Electric</text><text transform="rotate(-45 260 462)" x="235" y="462">Gas</text><text transform="rotate(-45 330 450)" x="285" y="490">Compressed Gas</text><text transform="rotate(-45 380 460)" x="350" y="460">Fuel</text><text transform="rotate(-45 420 460)" x="395" y="460">LPG</text><text transform="rotate(-45 470 475)" x="460" y="480">Hydrogen</text><text transform="rotate(-45 520 460)" x="495" y="460">Other</text></g>
        <path class="gd" d="M382 548V780"/><path class="gf" d="M15 622H525M15 697H525"/>
        <g class="dots"><circle cx="410" cy="608" r="3.5"/><circle cx="354" cy="642" r="3.5"/><circle cx="288" cy="648" r="3.5"/><circle cx="77" cy="711" r="3.5"/><circle cx="94" cy="717" r="3.5"/><circle cx="102" cy="724" r="3.5"/><circle cx="73" cy="731" r="3.5"/><circle cx="50" cy="736" r="3.5"/><circle cx="30" cy="738" r="3.5"/><circle cx="27" cy="748" r="3.5"/><circle cx="15" cy="738" r="3.5"/></g>
        <g class="tt"><text x="390" y="596">2.6M</text><text x="270" y="634">1.4M</text><text x="336" y="630">1.7M</text><text x="66" y="698">810K</text><text x="90" y="793">1M</text><text x="232" y="793">2M</text><text x="372" y="793">3M</text><text x="505" y="793">4M</text><text x="195" y="815">Production Volume</text></g>
        <path class="gd" d="M634 115V792M634 115H1500M634 199H1500M634 454H1500M634 625H1500M634 709H1500M634 792H1500"/>
        <path class="gf" d="M634 285H1500M634 370H1500M634 539H1500"/>
        <g class="tt r"><text x="624" y="119">80.0%</text><text x="624" y="203">70.0%</text><text x="624" y="289">60.0%</text><text x="624" y="374">50.0%</text><text x="624" y="458">40.0%</text><text x="624" y="543">30.0%</text><text x="624" y="629">20.0%</text><text x="624" y="713">10.0%</text><text x="624" y="790">0.0%</text></g>
        <text class="tt" transform="rotate(-90 565 500)" x="565" y="500">Production Volume</text>
        <path class="lte" d="M678 182L765 171L852 176L938 173L1025 168L1112 166L1198 166L1285 166L1372 165L1458 165"/>
        <path class="lpu" d="M678 619L765 624L852 621L938 625L1025 628L1112 632L1198 636L1285 640L1372 643L1458 646"/>
        <path class="lsa" d="M678 740L765 743L852 743L938 746L1025 750L1112 751L1198 751L1285 751L1372 752L1458 754"/>
        <path class="llb" d="M678 790L765 788L852 787L938 784L1025 780L1112 776L1198 772L1285 769L1372 767L1458 766"/>
        <path class="lro" d="M678 791H1458"/>
        <g class="tt mid"><text x="660" y="186">67.8%</text><text x="767" y="165">69.4%</text><text x="854" y="170">68.9%</text><text x="940" y="164">69.4%</text><text x="1026" y="161">70.1%</text><text x="1112" y="158">70.7%</text><text x="1199" y="158">70.8%</text><text x="1286" y="158">70.8%</text><text x="1373" y="158">70.8%</text><text x="1475" y="169">71.0%</text><text x="660" y="623">20.6%</text><text x="767" y="617">19.9%</text><text x="854" y="611">19.9%</text><text x="940" y="618">20.0%</text><text x="1026" y="621">19.5%</text><text x="1112" y="623">18.8%</text><text x="1199" y="629">18.3%</text><text x="1286" y="632">17.8%</text><text x="1373" y="635">17.4%</text><text x="1478" y="650">17.0%</text><text x="660" y="744">6.4%</text><text x="767" y="734">7.0%</text><text x="854" y="734">7.0%</text><text x="940" y="737">6.4%</text><text x="1026" y="743">6.0%</text><text x="1112" y="743">6.0%</text><text x="1199" y="743">6.0%</text><text x="1286" y="743">6.0%</text><text x="1373" y="743">5.7%</text><text x="1475" y="758">5.2%</text><text x="678" y="780">0.4%</text><text x="765" y="778">0.7%</text><text x="852" y="776">0.9%</text><text x="938" y="775">1.1%</text><text x="1025" y="773">1.4%</text><text x="1097" y="773">1.9%</text><text x="1270" y="764">3.2%</text></g>
        <g class="tt mid"><text x="678" y="809">2015</text><text x="765" y="809">2016</text><text x="852" y="809">2017</text><text x="938" y="809">2018</text><text x="1025" y="809">2019</text><text x="1112" y="809">2020</text><text x="1198" y="809">2021</text><text x="1285" y="809">2022</text><text x="1372" y="809">2023</text><text x="1458" y="809">2024</text></g>
      </svg>
      <p class="cap">Fuel Type Trends</p>
    </article>

    <article class="card">
      <svg class="thumb" viewBox="30 21 1485 804">
        <text class="th" x="30" y="84">Names</text>
        <path class="gf" d="M30 130H177M30 187H177M30 271H177M30 355H177M30 409H177M30 466H177M30 550H177M30 634H177M30 688H177M30 745H177M30 825H177M190 133H1515"/>
        <path class="gl" d="M30 214H177M30 298H177M30 382H177M30 493H177M30 577H177M30 661H177M30 772H177"/>
        <g class="chip"><rect x="190" y="71" width="51" height="24"/><rect x="246" y="71" width="52" height="24"/><rect x="303" y="71" width="55" height="24"/><rect x="363" y="71" width="56" height="24"/><rect x="423" y="71" width="57" height="24"/><rect x="485" y="71" width="57" height="24"/><rect x="548" y="71" width="58" height="24"/><rect x="610" y="71" width="58" height="24"/></g>
        <g class="chipi"><circle cx="206" cy="83" r="7"/><circle cx="263" cy="83" r="7"/><circle cx="319" cy="83" r="7"/><circle cx="379" cy="83" r="7"/><circle cx="439" cy="83" r="7"/><circle cx="502" cy="83" r="7"/><circle cx="565" cy="83" r="7"/><circle cx="627" cy="83" r="7"/></g>
        <path class="sw1" d="M222 76h10v14h-10z"/><path class="bo" d="M279 76h9v14h-9z"/><path class="sw2" d="M335 79h14v7h-14zM395 79h14v7h-14z"/><path class="sw3" d="M457 76h12v14h-12zM520 76h12v14h-12z"/>
        <g class="tt"><text x="582" y="87">ML</text><text x="644" y="87">HL</text></g>
        <rect class="gbtn" x="928" y="75" width="242" height="29"/><rect class="sbtn" x="1173" y="75" width="240" height="29"/><rect class="sbtn" x="1416" y="75" width="99" height="29"/>
        <text class="tbw" x="1049" y="93">Volume</text><text class="tbg" x="1293" y="93">Share</text>
        <path class="gd2" d="M212 135V232"/>
        <path class="gd" d="M190 214H1515"/>
        <path class="gf" d="M212 176H1515M344 176V232M476 176V232M608 176V232M740 176V232M872 176V232M1264 176V232"/>
        <rect class="outline" x="218" y="143" width="53" height="25"/><rect class="outline" x="281" y="143" width="76" height="25"/><rect class="outline" x="362" y="143" width="71" height="25"/>
        <g class="tt"><text x="226" y="159">Year Q</text><text x="288" y="159">Quarter Q</text><text x="371" y="159">Month Q</text>
        <text x="262" y="198">◐ 2015</text><text x="394" y="198">◐ 2016</text><text x="526" y="198">◐ 2017</text><text x="658" y="198">◐ 2018</text><text x="790" y="198">◐ 2019</text><text x="921" y="198">◐ 2020</text><text x="1052" y="198">◐ 2021</text><text x="1184" y="198">◐ 2022</text><text x="1315" y="198">◐ 2023</text><text x="1446" y="198">◐ 2024</text>
        <text class="r" x="337" y="228">87,953,206</text><text class="r" x="468" y="228">91,854,484</text><text class="r" x="600" y="228">94,611,315</text><text class="r" x="732" y="228">94,612,227</text><text class="r" x="863" y="228">95,261,355</text><text class="r" x="994" y="228">97,501,705</text><text class="r" x="1126" y="228">99,485,845</text><text class="r" x="1257" y="228">101,254,812</text><text class="r" x="1389" y="228">102,654,106</text><text class="r" x="1513" y="228">104,154,805</text></g>
      </svg>
      <p class="cap">Data Table</p>
    </article>

    <article class="card">
      <svg class="thumb" viewBox="15 21 1485 804">
        <text class="tl" x="22" y="46">Trends</text>
        <path class="gl" d="M15 95H248V68M258 95H608M620 68V95H970V68M982 95H1332"/>
        <g class="tt b"><text x="17" y="87">Brand</text><text x="262" y="87">Sel. Transmission Drill Down</text><text x="628" y="87">Sel. Region Drill Down</text><text x="988" y="87">Transmission Supplier</text></g>
        <text class="th" x="15" y="146">for 2018</text><text class="th" x="618" y="146">Transmission Type Outlook</text>
        <g transform="rotate(-90 253 299)">
          <circle class="don2 dpu" cx="253" cy="299" r="94" pathLength="100" stroke-dasharray="39 61"/>
          <circle class="don2 dte" cx="253" cy="299" r="94" pathLength="100" stroke-dasharray="34 66" stroke-dashoffset="-39"/>
          <circle class="don2 dlb" cx="253" cy="299" r="94" pathLength="100" stroke-dasharray="10 90" stroke-dashoffset="-73"/>
          <circle class="don2 dgr" cx="253" cy="299" r="94" pathLength="100" stroke-dasharray="14 86" stroke-dashoffset="-83"/>
          <circle class="don2 dsa" cx="253" cy="299" r="94" pathLength="100" stroke-dasharray="1 99" stroke-dashoffset="-97"/>
          <circle class="don2 dro" cx="253" cy="299" r="94" pathLength="100" stroke-dasharray="1 99" stroke-dashoffset="-98"/>
          <circle class="don2 dma" cx="253" cy="299" r="94" pathLength="100" stroke-dasharray="1 99" stroke-dashoffset="-99"/>
        </g>
        <g class="tt"><text x="197" y="176">Manuals</text><text x="156" y="191">Dual Clutch</text><text x="120" y="260">CVT</text><text x="366" y="270">Manual</text><text x="162" y="416">Automatic</text><text x="212" y="247">14.1%</text><text x="183" y="282">10.4%</text><text x="300" y="288">38.6%</text><text x="212" y="364">34.2%</text></g>
        <path class="gf" d="M668 160H1490"/>
        <g class="tt r"><text x="660" y="173">120M</text><text x="660" y="208">100M</text><text x="660" y="249">80M</text><text x="660" y="290">60M</text><text x="660" y="334">40M</text><text x="660" y="375">20M</text><text x="660" y="411">0</text></g>
        <path class="gy" d="M684 228h49v6h-49z"/>
        <path class="sa" d="M754 222h49v4h-49zM825 219h49v4h-49zM896 216h49v4h-49zM966 213h49v4h-49zM1037 207h49v6h-49zM1108 203h49v7h-49zM1179 198h49v8h-49zM1250 194h49v8h-49zM1320 192h49v9h-49z"/>
        <path class="ma" d="M1037 202h49v5h-49zM1108 198h49v5h-49zM1179 192h49v6h-49zM1250 189h49v5h-49zM1320 186h49v6h-49z"/>
        <path class="gr" d="M684 233h49v63h-49zM754 225h49v63h-49zM825 222h49v63h-49zM896 219h49v63h-49zM966 216h49v63h-49zM1037 213h49v63h-49zM1108 210h49v63h-49zM1179 206h49v63h-49zM1250 202h49v65h-49zM1320 201h49v63h-49z"/>
        <path class="lb" d="M684 296h49v25h-49zM754 288h49v27h-49zM825 285h49v27h-49zM896 282h49v30h-49zM966 279h49v30h-49zM1037 276h49v30h-49zM1108 273h49v30h-49zM1179 269h49v32h-49zM1250 267h49v33h-49zM1320 264h49v33h-49z"/>
        <path class="te" d="M684 321h49v81h-49zM754 315h49v84h-49zM825 312h49v84h-49zM896 312h49v81h-49zM966 309h49v84h-49zM1037 306h49v84h-49zM1108 303h49v84h-49zM1179 301h49v86h-49zM1250 300h49v84h-49zM1320 297h49v87h-49z"/>
        <path class="pu" d="M684 402h49v12h-49zM754 399h49v15h-49zM825 396h49v18h-49zM896 393h49v21h-49zM966 393h49v21h-49zM1037 390h49v24h-49zM1108 387h49v27h-49zM1179 387h49v27h-49zM1250 384h49v30h-49zM1320 384h49v30h-49z"/>
        <path class="gr" d="M1392 391h49v6h-49z"/><path class="lb" d="M1392 397h49v4h-49z"/><path class="te" d="M1392 401h49v7h-49z"/><path class="pu" d="M1392 408h49v6h-49z"/>
        <g class="tt mid"><text x="708" y="428">2015</text><text x="779" y="428">2016</text><text x="850" y="428">2017</text><text x="921" y="428">2018</text><text x="992" y="428">2019</text><text x="1062" y="428">2020</text><text x="1133" y="428">2021</text><text x="1204" y="428">2022</text><text x="1275" y="428">2023</text><text x="1345" y="428">2024</text><text x="1416" y="428">2025</text></g>
        <text class="th" x="15" y="462">Use Type for 2018</text><text class="th" x="618" y="462">Transmission Speed Outlook</text>
        <path class="gf" d="M23 476V755M134 476V755M352 476V755M665 478H1500M665 715H1500"/><path class="gl" d="M665 637H1500M665 560H1500"/>
        <g class="bub flat">
          <circle class="ol" cx="27" cy="495" r="6"/><circle class="pu" cx="45" cy="495" r="6"/><circle class="ma" cx="25" cy="533" r="6"/><circle class="ol" cx="39" cy="533" r="6"/><circle class="ro" cx="51" cy="533" r="6"/><circle class="dr" cx="72" cy="533" r="6"/><circle class="sa" cx="97" cy="533" r="7"/><circle class="gr" cx="184" cy="533" r="6"/><circle class="bl" cx="329" cy="533" r="6"/><circle class="te" cx="320" cy="570" r="6"/><circle class="bo" cx="27" cy="607" r="6"/><circle class="bl" cx="71" cy="607" r="7"/><circle class="ol" cx="169" cy="607" r="7"/><circle class="lb" cx="50" cy="644" r="6"/><circle class="dr" cx="26" cy="681" r="6"/><circle class="bl" cx="351" cy="681" r="6"/><circle class="pu" cx="557" cy="681" r="6"/><circle class="bo" cx="33" cy="718" r="6"/>
          <circle class="lb" cx="39" cy="781" r="6"/><circle class="ma" cx="126" cy="781" r="6"/><circle class="wi" cx="213" cy="781" r="6"/><circle class="dr" cx="300" cy="781" r="6"/><circle class="pu" cx="387" cy="781" r="6"/><circle class="bl" cx="475" cy="781" r="6"/><circle class="ol" cx="39" cy="807" r="6"/><circle class="gr" cx="126" cy="807" r="6"/><circle class="sa" cx="213" cy="807" r="6"/><circle class="ro" cx="300" cy="807" r="6"/><circle class="te" cx="387" cy="807" r="6"/><circle class="wi" cx="475" cy="807" r="6"/>
        </g>
        <g class="tt"><text x="53" y="785">1</text><text x="140" y="785">2</text><text x="227" y="785">3</text><text x="315" y="785">4</text><text x="402" y="785">5</text><text x="489" y="785">6</text><text x="53" y="811">7</text><text x="140" y="811">8</text><text x="227" y="811">9</text><text x="315" y="811">10</text><text x="402" y="811">Infinite</text><text x="489" y="811">Unknown</text>
        <text x="23" y="761">0</text><text x="127" y="761">5M</text><text x="235" y="761">10M</text><text x="343" y="761">15M</text><text x="453" y="761">20M</text><text x="562" y="761">25M</text></g>
        <g class="tt r"><text x="655" y="490">40M</text><text x="655" y="563">30M</text><text x="655" y="641">20M</text><text x="655" y="719">10M</text><text x="655" y="792">0</text></g>
        <path class="llbd" d="M706 533L790 520L870 530L950 548L1030 565L1100 568L1200 566L1300 565L1420 563L1500 785"/>
        <path class="lpud" d="M706 562L790 570L870 575L950 583L1030 583L1130 586L1200 585L1300 584L1420 583L1500 785"/>
        <path class="lted" d="M706 698L800 691L900 688L1000 682L1100 680L1200 675L1300 672L1420 670L1500 785"/>
        <path class="lgrd" d="M706 762L780 752L860 742L950 730L1050 721L1150 718L1250 715L1420 715L1500 785"/>
        <path class="lold" d="M706 762L780 755L1050 720L1250 712L1420 710L1500 785"/>
        <path class="lsad" d="M706 785L800 773L950 760L1100 758L1250 752L1420 747L1500 785"/>
        <path class="lwid" d="M720 770L800 770L950 778L1100 776L1250 770L1420 770L1500 785"/>
        <path class="lrod" d="M800 790L900 786L1050 785L1200 775L1420 775L1500 785"/>
        <g class="tt mid"><text x="705" y="809">2015</text><text x="785" y="809">2016</text><text x="864" y="809">2017</text><text x="944" y="809">2018</text><text x="1023" y="809">2019</text><text x="1102" y="809">2020</text><text x="1182" y="809">2021</text><text x="1261" y="809">2022</text><text x="1340" y="809">2023</text><text x="1420" y="809">2024</text></g>
      </svg>
      <p class="cap">Transmission Trends</p>
    </article>

    <article class="card">
      <svg class="thumb" viewBox="30 24 1485 804">
        <text class="tl" x="30" y="50">/ Trends</text>
        <text class="th" x="30" y="86">f Hybrid an EV Types</text>
        <text class="th" x="778" y="86">Volume for 2016 and Change for 2016/2017</text>
        <path class="ag1" d="M30 287L95 262L155 254L220 245L280 232L345 212L405 199L470 185L530 174L592 168V798H30z"/>
        <path class="ag2" d="M30 326L95 303L155 297L220 285L280 272L345 258L405 252L470 244L530 235L592 226V798H30z"/>
        <path class="ag3" d="M30 358L95 340L155 333L220 322L280 311L345 300L405 293L470 286L530 279L592 271V798H30z"/>
        <path class="ag4" d="M30 452L75 451L150 470L210 476L280 479L345 478L405 473L470 466L530 460L592 457V798H30z"/>
        <path class="ag5" d="M30 748L95 741L155 738L210 737L280 720L345 708L405 698L470 688L530 677L592 673V798H30z"/>
        <path class="ag6" d="M30 752L95 745L155 742L210 741L280 726L345 714L405 704L470 694L530 686L592 685V798H30z"/>
        <path class="ag3" d="M30 782L155 778L210 772L280 756L345 743L405 735L470 725L530 718L592 712V798H30z"/>
        <path class="ag7" d="M30 783L155 779L210 773L280 766L345 764L405 760L470 758L530 756L592 754V798H30z"/>
        <path class="ag8" d="M30 786L155 782L210 776L280 773L345 770L405 767L470 765L530 763L592 762V798H30z"/>
        <path class="ag9" d="M120 795L210 792L280 789L345 787L405 782L470 781L530 780L592 777V798H120z"/>
        <path class="ag1-l" d="M30 287L95 262L155 254L220 245L280 232L345 212L405 199L470 185L530 174L592 168"/>
        <path class="ag2-l" d="M30 326L95 303L155 297L220 285L280 272L345 258L405 252L470 244L530 235L592 226"/>
        <path class="ag3-l" d="M30 358L95 340L155 333L220 322L280 311L345 300L405 293L470 286L530 279L592 271"/>
        <path class="ag4-l" d="M30 452L75 451L150 470L210 476L280 479L345 478L405 473L470 466L530 460L592 457"/>
        <path class="ag5-l" d="M30 748L95 741L155 738L210 737L280 720L345 708L405 698L470 688L530 677L592 673"/>
        <path class="ag5-l" d="M30 782L155 778L210 772L280 756L345 743L405 735L470 725L530 718L592 712"/>
        <path class="ag9-l" d="M30 786L155 782L210 776L280 773L345 770L405 767L470 765L530 763L592 762"/>
        <path class="ag9-l" d="M120 795L210 792L280 789L345 787L405 782L470 781L530 780L592 775"/>
        <path class="agrid" d="M30 334H625M30 682H625"/><path class="gf" d="M30 217H625M30 565H625"/>
        <g class="tt mid"><text x="38" y="811">15</text><text x="93" y="811">2016</text><text x="155" y="811">2017</text><text x="218" y="811">2018</text><text x="280" y="811">2019</text><text x="342" y="811">2020</text><text x="405" y="811">2021</text><text x="467" y="811">2022</text><text x="530" y="811">2023</text><text x="592" y="811">2024</text></g>
        <path class="legg" d="M633 119h9M633 141h9M633 188h9M633 212h9M633 284h9M633 440h9"/><path class="legd" d="M633 235h9M633 260h9M633 308h9"/>
        <g class="tt"><text x="648" y="122">Cell</text><text x="648" y="145">FCEV</text><text x="648" y="167">HEV</text><text x="648" y="191">MHEV</text><text x="648" y="215">PHEV</text><text x="648" y="233">MHEV</text><text x="648" y="245">48V</text><text x="648" y="258">MHEV</text><text x="648" y="270">12V</text><text x="648" y="287">PHEV</text><text x="648" y="311">Pure</text><text x="648" y="331">Extended Range</text><text x="648" y="342">Electric Vehicle</text><text x="648" y="362">Extended Range</text><text x="648" y="372">Electric</text><text x="648" y="390">BEV</text><text x="648" y="401">ICE</text><text x="648" y="416">Unknown</text><text x="648" y="437">Extended Range</text><text x="648" y="448">Hybrid Vehicle</text></g>
        <rect class="outline" x="832" y="110" width="690" height="173"/><path class="gf" d="M964 110V283M1097 110V283"/><path class="gd" d="M832 196H1515"/>
        <g class="tt r"><text x="822" y="122">100%</text><text x="822" y="200">0%</text><text x="822" y="281">-100%</text></g>
        <g class="bub flat sm"><circle class="pu" cx="843" cy="153" r="3"/><circle class="bl" cx="843" cy="163" r="2.5"/><circle class="dr" cx="838" cy="186" r="3"/><circle class="dr" cx="849" cy="186" r="3"/><circle class="pu" cx="838" cy="196" r="3"/><circle class="bl" cx="851" cy="202" r="3"/><circle class="pu" cx="858" cy="200" r="3"/><circle class="gr" cx="870" cy="178" r="3"/><circle class="wi" cx="872" cy="187" r="3"/><circle class="ro" cx="878" cy="186" r="3"/><circle class="lb" cx="872" cy="205" r="3"/><circle class="ol" cx="918" cy="176" r="3"/><circle class="te" cx="926" cy="193" r="3"/><circle class="sa" cx="938" cy="198" r="3"/><circle class="wi" cx="957" cy="200" r="3"/><circle class="bl" cx="965" cy="192" r="3"/><circle class="gr" cx="1005" cy="195" r="3"/><circle class="te" cx="1020" cy="198" r="3"/><circle class="lb" cx="1032" cy="198" r="3"/><circle class="ol" cx="1119" cy="195" r="3"/><circle class="pu" cx="1170" cy="189" r="3"/><circle class="ro" cx="1175" cy="197" r="3"/><circle class="sa" cx="1240" cy="198" r="3"/><circle class="ro" cx="1327" cy="197" r="3"/><circle class="pu" cx="1494" cy="197" r="3"/></g>
        <g class="tt"><text x="893" y="165">Maruti Suzuki</text><text x="1108" y="180">Fiat Chrysler Automotive</text><text x="1293" y="186">Hyundai Group</text><text x="1476" y="183">Renault</text><text x="832" y="304">0</text><text x="956" y="304">1M</text><text x="1088" y="304">2M</text><text x="1222" y="304">3M</text><text x="1350" y="304">4M</text><text x="1486" y="304">5M</text></g>
        <text class="th" x="780" y="339">Production Locations for 2018</text><text class="tx" x="780" y="354">Colour Density shows Volume 0 ...</text>
        <svg x="780" y="390" width="735" height="435" viewBox="780 390 735 435"><use href="#world"/></svg>
        <g class="hot">
          <circle cx="1050" cy="578" r="14"/><circle cx="1075" cy="595" r="14"/><circle cx="1080" cy="570" r="16"/><circle cx="1098" cy="565" r="12"/><circle cx="1060" cy="585" r="9"/><circle cx="1106" cy="620" r="11"/><circle cx="1155" cy="635" r="9"/><circle cx="1140" cy="652" r="13"/><circle cx="1125" cy="668" r="12"/><circle cx="1205" cy="618" r="7"/><circle cx="1237" cy="665" r="12"/><circle cx="1248" cy="625" r="4"/>
          <circle cx="1190" cy="555" r="12"/><circle cx="1205" cy="540" r="18"/><circle cx="1225" cy="545" r="18"/><circle cx="1240" cy="535" r="16"/><circle cx="1245" cy="555" r="14"/><circle cx="1215" cy="565" r="14"/><circle cx="1265" cy="545" r="8"/><circle cx="1240" cy="522" r="6"/><circle cx="1272" cy="575" r="12"/><circle cx="1295" cy="570" r="9"/><circle cx="1300" cy="600" r="18"/><circle cx="1305" cy="610" r="14"/><circle cx="1285" cy="590" r="6"/><circle cx="1340" cy="630" r="10"/><circle cx="1337" cy="522" r="4"/>
          <circle cx="1335" cy="590" r="18"/><circle cx="1360" cy="570" r="22"/><circle cx="1375" cy="575" r="19"/><circle cx="1350" cy="595" r="20"/><circle cx="1345" cy="580" r="14"/><circle cx="1370" cy="590" r="12"/>
        </g>
        <path class="hot2" d="M1322 610L1380 590L1355 620L1335 620Z"/><path class="hot2" d="M1255 548L1280 542L1275 555L1260 555Z"/><path class="hot3" d="M1218 533H1238L1234 546L1218 544Z"/><circle class="hot3" cx="1284" cy="544" r="3"/>
      </svg>
      <p class="cap">Hybrid and EV</p>
    </article>

    <article class="card">
      <svg class="thumb" viewBox="15 24 1485 804">
        <text class="tl" x="22" y="49">Trends</text>
        <path class="gl" d="M15 97H465M475 72V97H1045M1055 72V97H1500"/>
        <g class="tt b"><text x="482" y="89">Sel. Engine Drill</text><text x="1062" y="89">Source</text></g>
        <text class="th" x="474" y="148">Booster Stages</text><text class="th" x="1056" y="148">Number of Boosters</text>
        <path class="bl1" d="M15 211L45 211L95 238L145 256L195 274L245 277L295 277L345 275L395 275L438 268V742H15z"/>
        <path class="bl2" d="M15 605L95 575L145 555L195 535L245 514L295 503L345 488L395 477L438 473V742H15z"/>
        <path class="gr1" d="M15 646L50 644L95 642L145 650L195 658L230 662L245 662L295 660L345 657L395 654L438 652V742H15z"/>
        <path class="gr2" d="M15 688L95 677L145 672L195 665L245 662L295 660L438 655V742H15z"/>
        <path class="dk1" d="M15 720L95 705L145 693L195 676L245 662L295 664L345 666L395 664L438 660V742H15z"/>
        <path class="dk2" d="M15 725L95 718L195 712L295 712L345 710L438 705V742H15z"/>
        <path class="ag1-l" d="M15 211L45 211L95 238L145 256L195 274L245 277L295 277L345 275L395 275L438 268"/>
        <path class="lte" d="M15 605L95 575L145 555L195 535L245 514L295 503L345 488L395 477L438 473"/>
        <path class="lgr" d="M15 688L95 677L145 672L195 665L245 662L295 660L438 652"/>
        <path class="lpu" d="M15 720L95 705L145 693L195 676L245 662L295 658L345 656L395 654L438 652"/>
        <path class="lrd" d="M15 742L200 740L300 738L438 738"/>
        <path class="agrid2" d="M15 358H464M15 454H464M15 550H464"/>
        <g class="tt mid"><text x="50" y="759">2016</text><text x="97" y="759">2017</text><text x="145" y="759">2018</text><text x="195" y="759">2019</text><text x="243" y="759">2020</text><text x="292" y="759">2021</text><text x="342" y="759">2022</text><text x="390" y="759">2023</text><text x="438" y="759">2024</text></g>
        <path class="legg" d="M85 785h8M285 785h8"/><path class="legm" d="M185 785h8M285 808h8"/><path class="legd" d="M85 808h8M185 808h8M382 785h8M382 808h8"/>
        <g class="tt"><text x="15" y="788">NA</text><text x="100" y="788">NA</text><text x="200" y="788">1.6DAC</text><text x="300" y="788">1.8m</text><text x="398" y="788">S/C</text><text x="445" y="788">M</text><text x="15" y="811">2.0M/S</text><text x="100" y="811">S</text><text x="200" y="811">T/C</text><text x="300" y="811">E-Booster</text><text x="398" y="811">S/C</text></g>
        <g class="tt r"><text x="540" y="176">60M</text><text x="540" y="269">50M</text><text x="540" y="371">40M</text><text x="540" y="470">30M</text><text x="540" y="572">20M</text><text x="540" y="671">10M</text><text x="540" y="764">0</text></g>
        <text class="tt" transform="rotate(-90 495 525)" x="495" y="525">Production Volume</text>
        <path class="bl1" d="M580 214L630 214L680 242L730 262L780 278L820 284L880 284L940 280L975 280L1020 271V766H580z"/>
        <path class="pu2" d="M820 282L880 258L940 236L975 218L1020 211V282H820z"/>
        <path class="pa" d="M580 460L630 420L680 376L730 345L780 306L820 282L880 283L940 280L975 280L1020 271V766H580z"/>
        <path class="gra" d="M580 755L680 753L730 749L820 745L940 743L1020 744V766H580z"/><path class="sa2" d="M580 757L1020 755V766H580z"/>
        <path class="lpu" d="M580 460L630 420L680 376L730 345L780 306L820 282L880 258L940 236L975 218L1020 211"/>
        <path class="ag1-l" d="M580 214L630 214L680 242L730 262L780 278L820 284"/><path class="ag3-l" d="M820 284L880 284L940 280L975 280L1020 271"/>
        <path class="agrid2" d="M530 265H1044M530 466H1044M530 667H1044"/>
        <g class="tt mid"><text x="580" y="781">2015</text><text x="630" y="781">2016</text><text x="678" y="781">2017</text><text x="727" y="781">2018</text><text x="775" y="781">2019</text><text x="825" y="781">2020</text><text x="873" y="781">2021</text><text x="921" y="781">2022</text><text x="970" y="781">2023</text><text x="1018" y="781">2024</text></g>
        <path class="legg" d="M562 808h8M645 808h8M728 808h8"/><path class="legl" d="M810 808h8"/><path class="legs" d="M893 808h8"/>
        <g class="tt"><text x="577" y="811">1</text><text x="660" y="811">0</text><text x="743" y="811">2</text><text x="826" y="811">NA</text><text x="912" y="811">Unknown</text></g>
        <g class="tt r"><text x="1125" y="176">60M</text><text x="1125" y="267">50M</text><text x="1125" y="362">40M</text><text x="1125" y="458">30M</text><text x="1125" y="555">20M</text><text x="1125" y="652">10M</text><text x="1125" y="742">0</text></g>
        <text class="tt" transform="rotate(-90 1075 515)" x="1075" y="515">Production Volume</text>
        <path class="gd" d="M1135 165V742"/>
        <path class="te3" d="M1160 217L1210 217L1260 247L1310 267L1360 287L1390 296L1450 300L1500 303V742H1160z"/>
        <path class="pu2" d="M1390 295L1410 282L1450 268L1500 247V303H1390z"/>
        <path class="pa2" d="M1160 449L1210 412L1260 372L1310 340L1360 308L1390 296L1450 300L1500 303V742H1160z"/>
        <path class="gr3" d="M1160 718L1260 714L1360 706L1440 700L1500 700V742H1160z"/>
        <path class="te4" d="M1160 736L1260 733L1360 725L1440 718L1500 713V742H1160z"/>
        <path class="lpu" d="M1160 449L1210 412L1260 372L1310 340L1360 308L1390 296L1410 282L1450 268L1500 247"/>
        <path class="lte" d="M1160 217L1210 217L1260 247L1310 267L1360 287L1390 296"/>
        <path class="ag3-l" d="M1390 296L1450 300L1500 303"/>
        <path class="lgr" d="M1160 718L1260 714L1360 706L1440 700L1500 700"/>
        <path class="llb" d="M1160 736L1260 733L1360 725L1440 718L1500 713"/>
        <path class="lrd" d="M1160 742H1500"/>
        <path class="agrid2" d="M1125 262H1500M1125 358H1500M1125 454H1500M1125 550H1500M1125 646H1500"/>
        <g class="tt mid"><text x="1160" y="759">2015</text><text x="1208" y="759">2016</text><text x="1258" y="759">2017</text><text x="1307" y="759">2018</text><text x="1356" y="759">2019</text><text x="1404" y="759">2020</text><text x="1453" y="759">2021</text></g>
        <path class="legg" d="M1147 785h8M1230 785h8"/><path class="legm" d="M1314 785h8M1397 785h8"/><path class="legd" d="M1147 808h8"/><path class="legs" d="M1230 808h8"/><path class="legl" d="M1314 808h8"/>
        <g class="tt"><text x="1162" y="788">0</text><text x="1245" y="788">1</text><text x="1329" y="788">4</text><text x="1412" y="788">Unknown</text><text x="1162" y="811">2</text><text x="1245" y="811">3</text><text x="1329" y="811">NA</text></g>
      </svg>
      <p class="cap">Engine Boost</p>
    </article>

  </div>
</main>
</body>
</html>
```

FILE: styles.css
```css
html, body { margin: 0; padding: 0; }
body {
  width: 1080px;
  height: 2340px;
  overflow: hidden;
  background: #dcdcdc;
  font-family: "Noto Sans", Roboto, sans-serif;
}
.status {
  height: 75px;
  background: #777777;
  color: #cfcfcf;
  display: flex;
  justify-content: space-between;
  align-items: center;
  padding: 0 60px 0 66px;
  box-sizing: border-box;
  font-family: Roboto, sans-serif;
}
.status-left, .status-right { display: flex; align-items: center; }
.carrier { font-size: 31px; margin-right: 5px; }
.ic { display: block; flex: none; }
.hot { margin-left: 11px; }
.sup { font-size: 22px; align-self: flex-start; margin: -8px 0 0 4px; }
.usb { margin-left: 8px; }
.status-right { gap: 10px; }
.batt { margin-left: 2px; }
.time { font-size: 36px; letter-spacing: 2px; margin-left: 2px; }
.fill { fill: #cfcfcf; }
.cut { fill: none; stroke: #777777; stroke-width: 3; }
.cut2 { fill: none; stroke: #9a9a9a; stroke-width: 1.5; }
.line { fill: none; stroke: #cfcfcf; }
.w1 { stroke-width: 1.5; }
.w2 { stroke-width: 2; }
.w3 { stroke-width: 3; }
.bfill { fill: #a0a0a0; }
.net { font: 700 15px Roboto, sans-serif; fill: #cfcfcf; }

.appbar {
  height: 168px;
  background: #0d3a4b;
  display: flex;
  align-items: center;
  padding-left: 60px;
  box-shadow: 0 3px 6px rgba(0,0,0,.18);
  position: relative;
  box-sizing: border-box;
}
.back { fill: none; stroke: #fff; stroke-width: 5; }
.apptitle {
  margin: 0 0 0 109px;
  font-size: 63.5px;
  font-weight: 400;
  color: #fff;
  line-height: 1;
  padding-bottom: 2px;
}
.content { padding: 0 30px; }
.apptext {
  margin: 0;
  height: 102px;
  box-sizing: border-box;
  padding: 35px 0 0 30px;
  font-size: 44.4px;
  line-height: 50px;
  font-weight: 400;
  color: #000;
  white-space: nowrap;
}
.grid {
  display: grid;
  grid-template-columns: 495px 495px;
  column-gap: 30px;
  row-gap: 30px;
}
.card {
  height: 516px;
  background: #fff;
  box-shadow: 0 3px 8px rgba(0,0,0,.3);
  overflow: hidden;
}
.thumb {
  display: block;
  width: 495px;
  height: 268px;
  filter: blur(.6px);
  font-family: "Open Sans", Roboto, sans-serif;
}
.cap {
  margin: 0;
  padding: 31px 30px 0;
  font-size: 47px;
  line-height: 62px;
  font-weight: 500;
  color: #808080;
}

/* palette */
.lb { fill: #88ccee; } .te { fill: #44aa99; } .gr { fill: #117733; } .ol { fill: #999933; }
.sa { fill: #ddcc77; } .ro { fill: #cc6677; } .bo { fill: #aa4466; } .wi { fill: #882255; }
.ma { fill: #aa4499; } .pu { fill: #332288; } .bl { fill: #6699cc; } .dr { fill: #661100; }
.gy { fill: #666; }
.tm path { stroke: #fff; stroke-width: 1; }
.bub circle { stroke: #fff; stroke-width: .6; fill-opacity: .9; }
.flat circle { stroke: none; fill-opacity: 1; }
.sea { fill: #cbd2d3; }
.land { fill: #f3f3f3; }

/* thumbnail text */
.tw { font-size: 10px; fill: #fff; }
.tl { font-size: 17px; fill: #aaa; }
.th { font-size: 12px; fill: #555; font-weight: 600; }
.tx { font-size: 10px; fill: #777; }
.ts { font-size: 11px; fill: #8b9698; letter-spacing: 1.5px; }
.tt { font-size: 10px; fill: #777; }
.tt .r, .r text, text.r { text-anchor: end; }
.tt.mid text, .mid { text-anchor: middle; }
.b { font-weight: 600; fill: #444; }
.tbw { font-size: 11px; fill: #eaffea; text-anchor: middle; }
.tbg { font-size: 11px; fill: #777; text-anchor: middle; }

/* lines */
.gl { fill: none; stroke: #e3e3e3; stroke-width: 2; }
.gd { fill: none; stroke: #cfcfcf; stroke-width: 3; }
.gd2 { fill: none; stroke: #aaa; stroke-width: 3; }
.gf { fill: none; stroke: #f0f0f0; stroke-width: 2; }
.shade { fill: #f1f1f1; }
.outline { fill: none; stroke: #ccc; stroke-width: 2; }
.barb { fill: #4477aa; }
.dash { fill: none; stroke: #cc8899; stroke-width: 1.5; stroke-dasharray: 6 3; }
.scrollb { fill: #e9edf2; }
.don { fill: none; stroke-width: 22; }
.don2 { fill: none; stroke-width: 34; }
.dbl { stroke: #4477aa; } .dro { stroke: #cc6677; } .dpu { stroke: #332288; } .dte { stroke: #44aa99; }
.dlb { stroke: #88ccee; } .dgr { stroke: #117733; } .dol { stroke: #999933; } .dsa { stroke: #ddcc77; }
.dma { stroke: #aa4499; }
.chy { fill: #fbeaa6; stroke: #555; stroke-width: .5; }
.chl { fill: none; stroke: #444; stroke-width: 1; stroke-dasharray: 3 4; }
.cho { fill: #ee8f2e; }
.chd { fill: #6b2400; }
.dots circle { fill: #4477aa; }
.lte, .lpu, .lsa, .llb, .lro, .lgr, .lrd { fill: none; stroke-width: 2.5; }
.lte { stroke: #3f9a8c; } .lpu { stroke: #332288; } .lsa { stroke: #ddcc77; } .llb { stroke: #7fbfdd; }
.lro { stroke: #bb6655; } .lgr { stroke: #117733; } .lrd { stroke: #aa3355; }
.llbd, .lpud, .lted, .lgrd, .lold, .lsad, .lwid, .lrod { fill: none; stroke-width: 1.5; stroke-dasharray: 26 10; }
.llbd { stroke: #88b8d0; } .lpud { stroke: #332288; } .lted { stroke: #66b0a4; } .lgrd { stroke: #117733; }
.lold { stroke: #999933; } .lsad { stroke: #ddcc77; } .lwid { stroke: #882255; } .lrod { stroke: #cc6677; }

/* data table card */
.chip rect { fill: #fff; stroke: #ccc; stroke-width: 2; }
.chipi circle { fill: #fff; stroke: #333; stroke-width: 3; }
.sw1 { fill: #cbc0a8; } .sw2 { fill: #666; } .sw3 { fill: #c9cfc0; }
.gbtn { fill: #52c952; }
.sbtn { fill: #d9d9d9; }

/* area charts */
.ag1 { fill: #bad5c3; } .ag2 { fill: #d9ecf9; } .ag3 { fill: #c0bcdc; } .ag4 { fill: #d0dfee; }
.ag5 { fill: #d8c4c2; } .ag6 { fill: #e3e0bf; } .ag7 { fill: #e7d6a8; } .ag8 { fill: #f6cdd8; } .ag9 { fill: #c2e0da; }
.ag1-l { fill: none; stroke: #6aa0bd; stroke-width: 2; }
.ag2-l { fill: none; stroke: #332288; stroke-width: 2; }
.ag3-l { fill: none; stroke: #4477aa; stroke-width: 2; }
.ag4-l { fill: none; stroke: #5577bb; stroke-width: 2; }
.ag5-l { fill: none; stroke: #442211; stroke-width: 2; }
.ag9-l { fill: none; stroke: #882255; stroke-width: 2; }
.agrid { fill: none; stroke: #9aa4ad; stroke-width: 2; }
.agrid2 { fill: none; stroke: rgba(90,100,110,.3); stroke-width: 2; }
.legg, .legd, .legm, .legl, .legs { fill: none; stroke-width: 2; }
.legg { stroke: #3f9a8c; } .legd { stroke: #221155; } .legm { stroke: #aa4477; } .legl { stroke: #88ccee; } .legs { stroke: #ddcc77; }
.hot circle { fill: #fdc65a; fill-opacity: .85; stroke: #f2a93b; stroke-width: 1; }
.hot2 { fill: #f08a24; }
.hot3 { fill: #3a1500; }
.bl1 { fill: #d8edf9; }
.bl2 { fill: #addbdc; }
.gr1 { fill: #a7c7a2; }
.gr2 { fill: #72ab83; }
.dk1 { fill: #647f7c; }
.dk2 { fill: #60889c; }
.pu2 { fill: #c0b6da; }
.pa { fill: #a8b2d6; }
.gra { fill: #8fb494; }
.sa2 { fill: #b8b88e; }
.te3 { fill: #c5e4dd; }
.pa2 { fill: #98a8c2; }
.gr3 { fill: #56907f; }
.te4 { fill: #6aa4b4; }
```
